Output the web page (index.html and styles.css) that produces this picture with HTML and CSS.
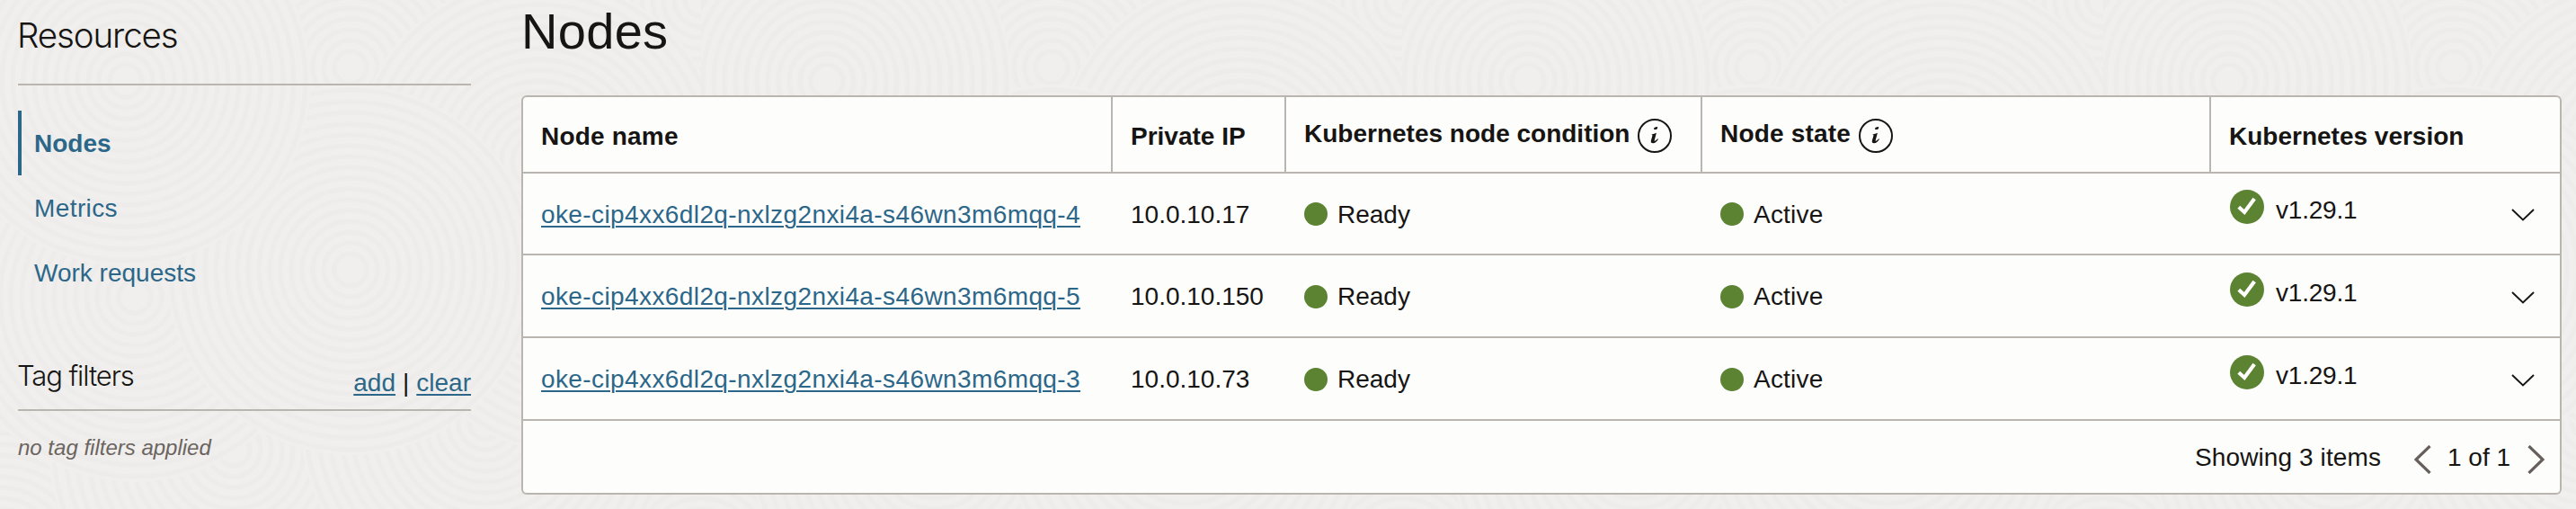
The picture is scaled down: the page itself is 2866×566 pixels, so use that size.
FILE: index.html
```html
<!DOCTYPE html>
<html lang="en">
<head>
<meta charset="utf-8">
<title>Nodes</title>
<link rel="stylesheet" href="styles.css">
</head>
<body>
<svg class="texture" aria-hidden="true">
  <defs>
    <g id="rings">
      <circle r="206" class="disc"/>
      <circle r="200"/><circle r="187"/><circle r="175"/><circle r="162"/><circle r="150"/><circle r="138"/><circle r="126"/><circle r="114"/><circle r="102"/><circle r="90"/><circle r="78"/><circle r="66"/><circle r="54"/><circle r="42"/><circle r="30"/><circle r="18"/>
    </g>
    <pattern id="waves" width="780" height="620" patternUnits="userSpaceOnUse">
      <rect width="780" height="620" fill="#f0efed"/>
      <g class="lines">
        <use href="#rings" x="0" y="0"/><use href="#rings" x="780" y="0"/>
        <use href="#rings" x="0" y="620"/><use href="#rings" x="780" y="620"/>
        <use href="#rings" x="260" y="500"/><use href="#rings" x="540" y="470"/>
        <use href="#rings" x="150" y="330"/><use href="#rings" x="640" y="300"/>
        <use href="#rings" x="390" y="75"/><use href="#rings" x="600" y="180"/>
        <use href="#rings" x="390" y="300"/><use href="#rings" x="140" y="90"/>
      </g>
    </pattern>
  </defs>
  <rect width="100%" height="100%" fill="url(#waves)"/>
</svg>
<svg class="sprites" aria-hidden="true">
  <symbol id="info" viewBox="0 0 38 38">
    <circle cx="19" cy="19" r="18" fill="none" stroke="#161513" stroke-width="2"/>
    <path d="M18 11.300c.1-1.200 1-1.900 2.300-2.100l1.800-.2c.3 1.700-.3 2.900-1.900 3-1.300.2-2.300.1-2.200-.7z" fill="#161513"/>
    <path d="M15.600 17.400c1.900-.3 3.700-.8 5.300-1.700l-2.200 8.300c-.2.900.2 1 .9.600 1-.6 1.900-1.400 2.700-2.400l.7.500c-1.500 2.700-3.700 4.500-5.900 4.500-1.900 0-2.700-1.100-2.200-2.900l1.500-5.200c.2-.8-.1-1-.8-1z" fill="#161513"/>
  </symbol>
  <symbol id="check" viewBox="0 0 38 38">
    <circle cx="19" cy="19" r="19" fill="#5b8332"/>
    <path d="M9.800 19.300l6.300 5.700L27.200 10" fill="none" stroke="#fff" stroke-width="4.200"/>
  </symbol>
  <symbol id="down" viewBox="0 0 26 14">
    <path d="M1 1l12 11.500L25 1" fill="none" stroke="#161513" stroke-width="1.900"/>
  </symbol>
  <symbol id="prev" viewBox="0 0 19 32">
    <path d="M17.500 1L2 16l15.500 15" fill="none" stroke="#665f5b" stroke-width="3.200"/>
  </symbol>
  <symbol id="next" viewBox="0 0 19 32">
    <path d="M1.500 1L17 16 1.500 31" fill="none" stroke="#665f5b" stroke-width="3.200"/>
  </symbol>
</svg>
<div class="layout">
  <aside class="sidebar">
    <h2 class="side-title">Resources</h2>
    <nav class="side-nav">
      <a class="nav-item active">Nodes</a>
      <a class="nav-item metrics">Metrics</a>
      <a class="nav-item">Work requests</a>
    </nav>
    <div class="filters">
      <h3 class="filters-title">Tag filters</h3>
      <div class="filters-actions"><a class="link">add</a><span>|</span><a class="link">clear</a></div>
    </div>
    <p class="filters-empty">no tag filters applied</p>
  </aside>
  <main class="content">
    <h1 class="title">Nodes</h1>
    <div class="table">
      <div class="row head">
        <div class="cell spaced">Node name</div>
        <div class="cell">Private IP</div>
        <div class="cell with-info">Kubernetes node condition<svg class="badge"><use href="#info"/></svg></div>
        <div class="cell with-info spaced">Node state<svg class="badge"><use href="#info"/></svg></div>
        <div class="cell">Kubernetes version</div>
      </div>
      <div class="row">
        <div class="cell"><a class="link name">oke-cip4xx6dl2q-nxlzg2nxi4a-s46wn3m6mqq-4</a></div>
        <div class="cell">10.0.10.17</div>
        <div class="cell status"><i class="dot"></i>Ready</div>
        <div class="cell status active-state"><i class="dot"></i>Active</div>
        <div class="cell version"><svg class="badge"><use href="#check"/></svg><span class="number">v1.29.1</span><svg class="expand"><use href="#down"/></svg></div>
      </div>
      <div class="row tall">
        <div class="cell"><a class="link name">oke-cip4xx6dl2q-nxlzg2nxi4a-s46wn3m6mqq-5</a></div>
        <div class="cell">10.0.10.150</div>
        <div class="cell status"><i class="dot"></i>Ready</div>
        <div class="cell status active-state"><i class="dot"></i>Active</div>
        <div class="cell version"><svg class="badge"><use href="#check"/></svg><span class="number">v1.29.1</span><svg class="expand"><use href="#down"/></svg></div>
      </div>
      <div class="row tall">
        <div class="cell"><a class="link name">oke-cip4xx6dl2q-nxlzg2nxi4a-s46wn3m6mqq-3</a></div>
        <div class="cell">10.0.10.73</div>
        <div class="cell status"><i class="dot"></i>Ready</div>
        <div class="cell status active-state"><i class="dot"></i>Active</div>
        <div class="cell version"><svg class="badge"><use href="#check"/></svg><span class="number">v1.29.1</span><svg class="expand"><use href="#down"/></svg></div>
      </div>
      <div class="footer">
        <span class="count">Showing 3 items</span>
        <svg class="page-arrow"><use href="#prev"/></svg>
        <span class="page">1 of 1</span>
        <svg class="page-arrow"><use href="#next"/></svg>
      </div>
    </div>
  </main>
</div>
</body>
</html>
```

FILE: styles.css
```css
* { box-sizing: border-box; }

body {
  margin: 0;
  height: 566px;
  overflow: hidden;
  background: #f0efed;
  color: #161513;
  font: 28px/32px "Liberation Sans", Arial, sans-serif;
}

h1, h2, h3, p { margin: 0; font-weight: 400; }

/* background ripple pattern */
.texture { position: absolute; inset: 0; width: 100%; height: 100%; z-index: -1; }
.disc { fill: #f0efed; stroke: none; }
.lines { fill: none; stroke: #edecea; stroke-width: 5; }
.sprites { position: absolute; width: 0; height: 0; }

.layout { display: flex; height: 566px; }

.sidebar { width: 504px; margin-left: 20px; flex: none; }
.side-title {
  height: 95px;
  padding-top: 15px;
  border-bottom: 2px solid #bbb5b0;
  font: 300 38.500px/48px Inter, "Liberation Sans", sans-serif;
  letter-spacing: -1.100px;
  text-indent: -1px;
}
.side-nav { display: flex; flex-direction: column; padding-top: 28px; }
.nav-item {
  height: 72px;
  padding: 21px 0 0 18px;
  color: #2c6789;
}
.nav-item.active { padding-left: 14px; border-left: 4px solid #2c6789; font-weight: 700; }
.metrics { letter-spacing: .4px; }

.link { color: #2c6789; text-decoration: underline; text-decoration-thickness: 2px; text-underline-offset: 3px; }

.filters {
  display: flex;
  justify-content: space-between;
  height: 118px;
  border-bottom: 2px solid #bbb5b0;
}
.filters-title {
  padding-top: 59px;
  font: 300 31px/40px Inter, "Liberation Sans", sans-serif;
  letter-spacing: -1.100px;
  text-indent: -1px;
}
.filters-actions { display: flex; gap: 8px; padding-top: 71px; }
.filters-empty {
  padding-top: 25px;
  font-size: 24px;
  font-style: italic;
  color: #6b6460;
}

.content { width: 2270px; margin-left: 56px; flex: none; }
.title { height: 106px; font-size: 56px; line-height: 70px; letter-spacing: .3px; }

.table {
  height: 444px;
  border: 2px solid #bbb5b0;
  border-radius: 6px;
  background: #fdfdfc;
  overflow: hidden;
}
.row {
  display: grid;
  grid-template-columns: 656px 193px 463px 566px 388px;
  height: 91px;
  border-bottom: 2px solid #bbb5b0;
}
.tall { height: 92px; }
.head { height: 85px; font-weight: 700; }
.cell { padding: 30px 0 0 20px; white-space: nowrap; }
.head .cell { padding-top: 28px; }
.head .cell:not(:last-child) { border-right: 2px solid #bbb5b0; }
.spaced { letter-spacing: .2px; }
.head .with-info { display: flex; gap: 9px; padding-top: 25px; }
.badge { width: 38px; height: 38px; flex: none; }
.with-info .badge { margin-top: -1px; }

.name { letter-spacing: .4px; }
.status { display: flex; gap: 11px; }
.active-state { letter-spacing: .2px; }
.dot { width: 26px; height: 26px; margin-top: 2px; border-radius: 50%; background: #5b8332; }
.tall .dot { margin-top: 3px; }

.version { display: flex; padding: 18px 28px 0 21px; }
.tall .version { padding-top: 19px; }
.number { margin-left: 13px; padding-top: 7px; letter-spacing: -.2px; }
.expand { width: 26px; height: 14px; margin: 21px 0 0 auto; }

.footer { display: flex; justify-content: flex-end; padding: 25px 17px 0 0; }
.count { letter-spacing: .1px; margin-right: 37px; }
.page-arrow { width: 19px; height: 32px; margin-top: 2px; }
.page { width: 71px; margin: 0 18px; }
```
